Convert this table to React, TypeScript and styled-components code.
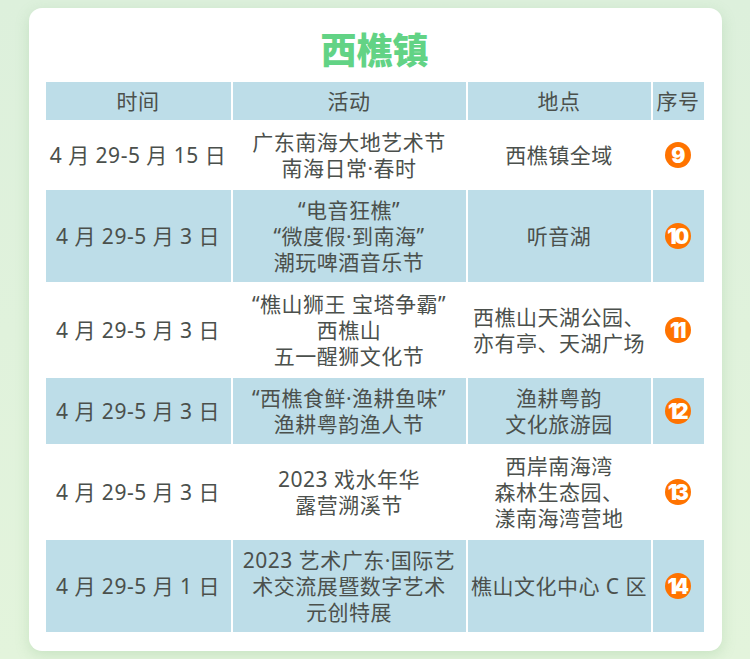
import React from "react";
import styled, { createGlobalStyle } from "styled-components";

const GlobalStyle = createGlobalStyle`
  html, body {
    margin: 0;
    padding: 0;
  }
  body {
    min-height: 659px;
    background: linear-gradient(180deg, #ddf0dc 0%, #e3f4dc 100%);
    font-family: "Noto Sans", "Noto Sans CJK SC", sans-serif;
  }
`;

const Page = styled.div`
  padding: 8px 0 8px;
`;

const Card = styled.section`
  width: 693px;
  margin: 0 auto;
  box-sizing: border-box;
  padding: 14px 18px 19px 17px;
  background: #ffffff;
  border-radius: 13px;
  box-shadow: 0 4px 14px rgba(120, 180, 120, 0.25);
`;

const Title = styled.h1`
  margin: 0 0 8px;
  text-align: center;
  font-family: "Noto Sans CJK SC", sans-serif;
  font-size: 36px;
  line-height: 52px;
  font-weight: 900;
  color: #62d385;
  letter-spacing: 0;
`;

const Grid = styled.div`
  display: grid;
  grid-template-columns: 185px 233px 183px 51px;
  gap: 2px;
`;

const Cell = styled.div<{ $shade: boolean; $head?: boolean }>`
  display: flex;
  align-items: center;
  justify-content: center;
  text-align: center;
  box-sizing: border-box;
  min-height: ${({ $head }) => ($head ? "38px" : "66px")};
  padding: ${({ $head }) => ($head ? "5px 0" : "7px 0")};
  background: ${({ $shade }) => ($shade ? "#bddde8" : "#ffffff")};
  color: #4b504c;
  font-size: 21px;
  line-height: 26px;
  letter-spacing: 0.5px;
  white-space: pre-line;
`;

const Badge = styled.span`
  display: inline-flex;
  align-items: center;
  justify-content: center;
  width: 26px;
  height: 26px;
  border-radius: 50%;
  background: #ff7300;
  color: #ffffff;
  font-family: Inter, "DejaVu Sans", sans-serif;
  font-weight: 900;
  font-size: 21px;
  letter-spacing: -2.5px;
  line-height: 1;
  text-indent: -2px;
`;

const header = ["时间", "活动", "地点", "序号"];

const rows = [
  {
    date: "4 月 29-5 月 15 日",
    event: "广东南海大地艺术节\n南海日常·春时",
    place: "西樵镇全域",
    no: 9,
  },
  {
    date: "4 月 29-5 月 3 日",
    event: "“电音狂樵”\n“微度假·到南海”\n潮玩啤酒音乐节",
    place: "听音湖",
    no: 10,
  },
  {
    date: "4 月 29-5 月 3 日",
    event: "“樵山狮王 宝塔争霸”\n西樵山\n五一醒狮文化节",
    place: "西樵山天湖公园、\n亦有亭、天湖广场",
    no: 11,
  },
  {
    date: "4 月 29-5 月 3 日",
    event: "“西樵食鲜·渔耕鱼味”\n渔耕粤韵渔人节",
    place: "渔耕粤韵\n文化旅游园",
    no: 12,
  },
  {
    date: "4 月 29-5 月 3 日",
    event: "2023 戏水年华\n露营溯溪节",
    place: "西岸南海湾\n森林生态园、\n漾南海湾营地",
    no: 13,
  },
  {
    date: "4 月 29-5 月 1 日",
    event: "2023 艺术广东·国际艺\n术交流展暨数字艺术\n元创特展",
    place: "樵山文化中心 C 区",
    no: 14,
  },
];

export default function App() {
  return (
    <>
      <GlobalStyle />
      <Page>
        <Card>
          <Title>西樵镇</Title>
          <Grid>
            {header.map((h) => (
              <Cell key={h} $shade $head>
                {h}
              </Cell>
            ))}
            {rows.map((r, i) => {
              const shade = i % 2 === 1;
              return (
                <React.Fragment key={r.no}>
                  <Cell $shade={shade}>{r.date}</Cell>
                  <Cell $shade={shade}>{r.event}</Cell>
                  <Cell $shade={shade}>{r.place}</Cell>
                  <Cell $shade={shade}>
                    <Badge>{r.no}</Badge>
                  </Cell>
                </React.Fragment>
              );
            })}
          </Grid>
        </Card>
      </Page>
    </>
  );
}
